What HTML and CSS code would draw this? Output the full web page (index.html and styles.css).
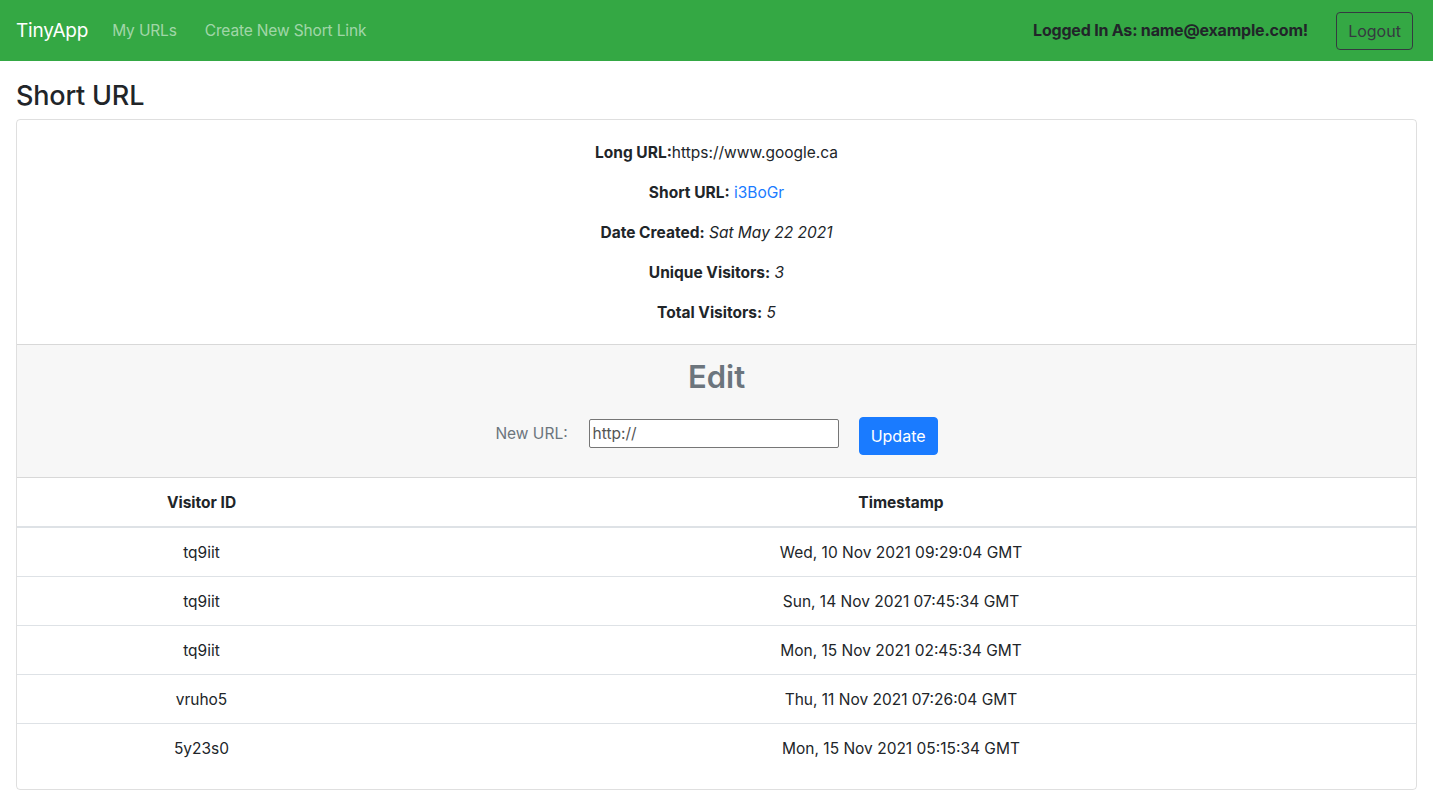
FILE: index.html
```html
<!DOCTYPE html>
<html>
<head>
<meta charset="utf-8">
<link rel="stylesheet" href="styles.css">
</head>
<body>
<nav class="navbar">
  <a class="brand" href="#">TinyApp</a>
  <a class="nav-link" href="#">My URLs</a>
  <a class="nav-link nav-link-2" href="#">Create New Short Link</a>
  <span class="spacer"></span>
  <span class="logged">Logged In As: name@example.com!</span>
  <button class="btn-logout">Logout</button>
</nav>
<main class="container">
  <h3 class="page-title">Short URL</h3>
  <div class="card">
    <div class="card-body">
      <p><b>Long URL:</b>https://www.google.ca</p>
      <p><b>Short URL:</b> <a href="#" class="link">i3BoGr</a></p>
      <p><b>Date Created:</b> <i>Sat May 22 2021</i></p>
      <p><b>Unique Visitors:</b> <i>3</i></p>
      <p class="last"><b>Total Visitors:</b> <i>5</i></p>
    </div>
    <div class="edit">
      <h2 class="edit-title">Edit</h2>
      <form class="edit-form">
        <label class="edit-label">New URL:</label>
        <input class="edit-input" type="text" value="http://">
        <button class="btn-update" type="button">Update</button>
      </form>
    </div>
    <table class="visits">
      <thead>
        <tr><th class="col-id">Visitor ID</th><th>Timestamp</th></tr>
      </thead>
      <tbody>
        <tr><td>tq9iit</td><td>Wed, 10 Nov 2021 09:29:04 GMT</td></tr>
        <tr><td>tq9iit</td><td>Sun, 14 Nov 2021 07:45:34 GMT</td></tr>
        <tr><td>tq9iit</td><td>Mon, 15 Nov 2021 02:45:34 GMT</td></tr>
        <tr><td>vruho5</td><td>Thu, 11 Nov 2021 07:26:04 GMT</td></tr>
        <tr><td>5y23s0</td><td>Mon, 15 Nov 2021 05:15:34 GMT</td></tr>
      </tbody>
    </table>
  </div>
</main>
</body>
</html>
```
FILE: styles.css
```css
* { box-sizing: border-box; }
html, body { margin: 0; padding: 0; }
body {
  font-family: Inter, "Noto Sans", "Liberation Sans", sans-serif;
  font-size: 16px;
  line-height: 24px;
  color: #212529;
  background: #fff;
}
.navbar {
  display: flex;
  align-items: center;
  height: 61px;
  padding: 0 20px 0 16px;
  background: #34a844;
}
.brand {
  color: #fff;
  font-size: 19px;
  text-decoration: none;
  margin-right: 24px;
  letter-spacing: -0.2px;
}
.nav-link {
  color: rgba(255,255,255,0.55);
  text-decoration: none;
  font-size: 15.5px;
  letter-spacing: -0.15px;
}
.nav-link-2 { margin-left: 28px; }
.spacer { flex: 1; }
.logged {
  font-weight: 700;
  color: #212529;
  font-size: 16px;
  letter-spacing: -0.2px;
  margin-right: 28px;
  margin-top: -2px;
}
.btn-logout {
  font-family: inherit;
  font-size: 16px;
  color: #343a40;
  background: transparent;
  border: 1px solid #343a40;
  border-radius: 4px;
  height: 38px;
  width: 77px;
  padding: 0;
}
.container { padding: 0 16px; }
.page-title {
  margin: 19px 0 8px;
  font-size: 27px;
  font-weight: 500;
  line-height: 31px;
  letter-spacing: -0.2px;
}
.card {
  border: 1px solid rgba(0,0,0,0.125);
  border-radius: 4px;
  padding-bottom: 17px;
}
.card-body {
  padding: 21px 20px 19px;
  text-align: center;
  font-size: 15.5px;
}
.card-body p { margin: 0 0 16px; }
.card-body p.last { margin-bottom: 0; }
.card-body b { font-weight: 700; }
.link { color: #1a7bff; text-decoration: none; }
.edit {
  background: #f7f7f7;
  border-top: 1px solid rgba(0,0,0,0.125);
  border-bottom: 1px solid rgba(0,0,0,0.125);
  padding: 13px 20px 22px;
  text-align: center;
}
.edit-title {
  margin: 0 0 21px;
  font-size: 31px;
  line-height: 38px;
  font-weight: 600;
  color: #6c757d;
}
.edit-form {
  display: flex;
  justify-content: center;
  align-items: center;
}
.edit-label {
  color: #6c757d;
  font-size: 15.5px;
  margin-right: 21px;
  margin-bottom: 4px;
}
.edit-input {
  width: 250px;
  height: 29px;
  border: 1px solid #767676;
  border-radius: 2px;
  font-family: inherit;
  font-size: 15.5px;
  color: #555;
  padding: 0 3px;
  margin-right: 20px;
  margin-bottom: 5px;
}
.btn-update {
  font-family: inherit;
  font-size: 16px;
  color: #fff;
  background: #1a7bff;
  border: 1px solid #1a7bff;
  border-radius: 4px;
  width: 79px;
  height: 38px;
  padding: 0;
}
.visits {
  width: 100%;
  border-collapse: collapse;
  font-size: 15.5px;
}
.visits th, .visits td {
  padding: 13px 12px 11px;
  text-align: center;
  line-height: 24px;
  border-top: 1px solid #dee2e6;
}
.visits thead th {
  border-top: none;
  border-bottom: 2px solid #dee2e6;
  font-weight: 700;
}
.visits tbody tr:first-child td { border-top: none; }
.col-id { width: 369px; }
```
